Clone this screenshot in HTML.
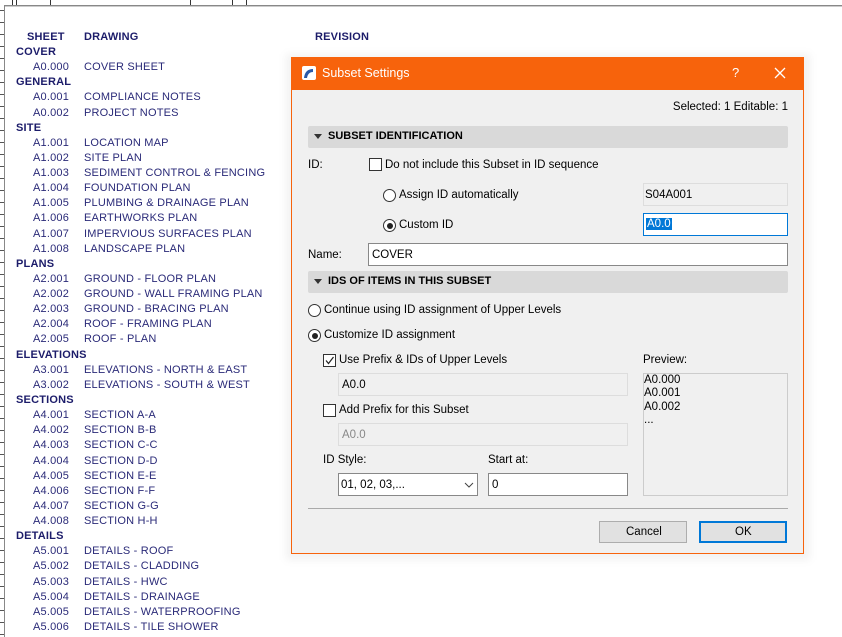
<!DOCTYPE html>
<html><head><style>
body{margin:0;width:842px;height:637px;background:#fff;position:relative;overflow:hidden;font-family:"Liberation Sans",sans-serif}
.a{position:absolute;white-space:nowrap}
.l{font-size:11px;color:#2a2a78;letter-spacing:.2px}
.h{font-weight:bold;color:#1c1c6a}
.d{font-family:"Liberation Sans",sans-serif;font-size:11.5px;color:#000}
.box{position:absolute;box-sizing:border-box}
.cb{position:absolute;width:13px;height:13px;border:1px solid #333;background:#fff;box-sizing:border-box}
.rb{position:absolute;width:13px;height:13px;border:1px solid #333;border-radius:50%;background:#fff;box-sizing:border-box}
.rb.on:after{content:"";position:absolute;left:2.5px;top:2.5px;width:6px;height:6px;border-radius:50%;background:#222}
.sec{position:absolute;left:308px;width:480px;height:22px;background:#d9d9d9;border-radius:2px}
.sec span{position:absolute;left:20px;top:4px;font-weight:bold;font-family:"Liberation Sans",sans-serif;font-size:11px}
.sec:before{content:"";position:absolute;left:6px;top:8px;border-left:4px solid transparent;border-right:4px solid transparent;border-top:5px solid #333}
</style></head><body>
<div class="box" style="left:0;top:5px;width:842px;height:2px;border-top:1px solid #888;border-bottom:1px solid #ccc"></div>
<div class="box" style="left:4px;top:5px;width:1px;height:632px;background:#888"></div>
<div class="box" style="left:0;top:0;width:4px;height:637px;background:repeating-linear-gradient(#fff 0 10px,#555 10px 11px,#fff 11px 12px)"></div>
<div class="box" style="left:12px;top:0;width:1px;height:5px;background:#333"></div>
<div class="box" style="left:16px;top:0;width:1px;height:5px;background:#333"></div>
<div class="box" style="left:50px;top:0;width:1px;height:5px;background:#333"></div>
<div class="box" style="left:190px;top:0;width:1px;height:5px;background:#333"></div>
<div class="box" style="left:232px;top:0;width:1px;height:5px;background:#333"></div>
<div class="box" style="left:246px;top:0;width:1px;height:5px;background:#333"></div>

<div class="a l h" style="left:27px;top:31px">SHEET</div>
<div class="a l h" style="left:84px;top:31px">DRAWING</div>
<div class="a l h" style="left:315px;top:31px">REVISION</div>
<div id="list"></div>
<script>
var rows=[["COVER"],["A0.000","COVER SHEET"],["GENERAL"],["A0.001","COMPLIANCE NOTES"],["A0.002","PROJECT NOTES"],["SITE"],["A1.001","LOCATION MAP"],["A1.002","SITE PLAN"],["A1.003","SEDIMENT CONTROL & FENCING"],["A1.004","FOUNDATION PLAN"],["A1.005","PLUMBING & DRAINAGE PLAN"],["A1.006","EARTHWORKS PLAN"],["A1.007","IMPERVIOUS SURFACES PLAN"],["A1.008","LANDSCAPE PLAN"],["PLANS"],["A2.001","GROUND - FLOOR PLAN"],["A2.002","GROUND - WALL FRAMING PLAN"],["A2.003","GROUND - BRACING PLAN"],["A2.004","ROOF - FRAMING PLAN"],["A2.005","ROOF - PLAN"],["ELEVATIONS"],["A3.001","ELEVATIONS - NORTH & EAST"],["A3.002","ELEVATIONS - SOUTH & WEST"],["SECTIONS"],["A4.001","SECTION A-A"],["A4.002","SECTION B-B"],["A4.003","SECTION C-C"],["A4.004","SECTION D-D"],["A4.005","SECTION E-E"],["A4.006","SECTION F-F"],["A4.007","SECTION G-G"],["A4.008","SECTION H-H"],["DETAILS"],["A5.001","DETAILS - ROOF"],["A5.002","DETAILS - CLADDING"],["A5.003","DETAILS - HWC"],["A5.004","DETAILS - DRAINAGE"],["A5.005","DETAILS - WATERPROOFING"],["A5.006","DETAILS - TILE SHOWER"]];
var h="";rows.forEach(function(r,i){var y=46+i*15.13;
if(r.length==1)h+='<div class="a l h" style="left:16px;top:'+y+'px">'+r[0]+'</div>';
else h+='<div class="a l" style="left:33px;top:'+y+'px">'+r[0]+'</div><div class="a l" style="left:84px;top:'+y+'px">'+r[1].replace(/&/g,"&amp;")+'</div>';});
document.getElementById("list").innerHTML=h;
</script>

<div class="box" style="left:286px;top:54px;width:524px;height:506px;background:rgba(0,0,0,.05);filter:blur(4px)"></div>
<div class="box" style="left:291px;top:57px;width:513px;height:497px;background:#f0f0f0;border:1px solid #f7630c"></div>
<div class="box" style="left:291px;top:57px;width:513px;height:33px;background:#f7630c"></div>
<svg class="a" style="left:302px;top:66px" width="14" height="14" viewBox="0 0 14 14"><rect width="14" height="14" rx="2" fill="#fff"/><path d="M2 12 Q3 3 11 3 L11 6 Q6 6 5 12Z" fill="#2b5aa8"/></svg>
<div class="a d" style="left:322px;top:66px;color:#fff;font-size:12.5px">Subset Settings</div>
<div class="a d" style="left:732px;top:65px;color:#fff;font-size:13px">?</div>
<svg class="a" style="left:774px;top:67px" width="12" height="12"><path d="M1 1L11 11M11 1L1 11" stroke="#fff" stroke-width="1.3"/></svg>

<div class="a d" style="right:54px;top:101px">Selected: 1 Editable: 1</div>
<div class="sec" style="top:126px"><span>SUBSET IDENTIFICATION</span></div>
<div class="a d" style="left:308px;top:159px">ID:</div>
<div class="cb" style="left:369px;top:158px"></div>
<div class="a d" style="left:385px;top:159px">Do not include this Subset in ID sequence</div>
<div class="rb" style="left:383px;top:189px"></div>
<div class="a d" style="left:399px;top:189px">Assign ID automatically</div>
<div class="box" style="left:643px;top:183px;width:145px;height:23px;background:#f0f0f0;border:1px solid #ddd"></div>
<div class="a d" style="left:645px;top:189px">S04A001</div>
<div class="rb on" style="left:383px;top:219px"></div>
<div class="a d" style="left:399px;top:219px">Custom ID</div>
<div class="box" style="left:643px;top:213px;width:145px;height:23px;background:#fff;border:1px solid #0078d7"></div>
<div class="a d" style="left:646px;top:218px;background:#0078d7;color:#fff;padding:0 1px">A0.0</div>
<div class="a d" style="left:308px;top:249px">Name:</div>
<div class="box" style="left:368px;top:243px;width:420px;height:23px;background:#fff;border:1px solid #888"></div>
<div class="a d" style="left:372px;top:249px">COVER</div>
<div class="sec" style="top:271px"><span>IDS OF ITEMS IN THIS SUBSET</span></div>
<div class="rb" style="left:308px;top:304px"></div>
<div class="a d" style="left:324px;top:304px">Continue using ID assignment of Upper Levels</div>
<div class="rb on" style="left:308px;top:329px"></div>
<div class="a d" style="left:324px;top:329px">Customize ID assignment</div>
<div class="cb" style="left:323px;top:354px"></div>
<svg class="a" style="left:324px;top:355px" width="11" height="11"><path d="M2 5.5L4.5 8.5L9.5 2" fill="none" stroke="#222" stroke-width="1.2"/></svg>
<div class="a d" style="left:339px;top:354px">Use Prefix &amp; IDs of Upper Levels</div>
<div class="box" style="left:338px;top:373px;width:290px;height:23px;background:#f0f0f0;border:1px solid #ddd"></div>
<div class="a d" style="left:342px;top:379px">A0.0</div>
<div class="cb" style="left:323px;top:404px"></div>
<div class="a d" style="left:339px;top:404px">Add Prefix for this Subset</div>
<div class="box" style="left:338px;top:423px;width:290px;height:23px;background:#f0f0f0;border:1px solid #ddd"></div>
<div class="a d" style="left:342px;top:429px;color:#888">A0.0</div>
<div class="a d" style="left:323px;top:454px">ID Style:</div>
<div class="a d" style="left:488px;top:454px">Start at:</div>
<div class="box" style="left:338px;top:473px;width:140px;height:23px;background:#fff;border:1px solid #888"></div>
<div class="a d" style="left:341px;top:479px">01, 02, 03,...</div>
<svg class="a" style="left:464px;top:482px" width="10" height="6"><path d="M1 1L5 5L9 1" fill="none" stroke="#444"/></svg>
<div class="box" style="left:488px;top:473px;width:140px;height:23px;background:#fff;border:1px solid #888"></div>
<div class="a d" style="left:492px;top:479px">0</div>
<div class="a d" style="left:643px;top:354px">Preview:</div>
<div class="box" style="left:643px;top:373px;width:145px;height:123px;background:#f0f0f0;border:1px solid #ccc"></div>
<div class="a d" style="left:644px;top:374px;line-height:13.3px">A0.000<br>A0.001<br>A0.002<br>...</div>
<div class="box" style="left:308px;top:508px;width:480px;height:1px;background:#aaa"></div>
<div class="box" style="left:599px;top:521px;width:88px;height:22px;background:#e1e1e1;border:1px solid #adadad"></div>
<div class="a d" style="left:626px;top:526px">Cancel</div>
<div class="box" style="left:699px;top:521px;width:88px;height:22px;background:#e1e1e1;border:2px solid #0078d7"></div>
<div class="a d" style="left:735px;top:526px">OK</div>
</body></html>
